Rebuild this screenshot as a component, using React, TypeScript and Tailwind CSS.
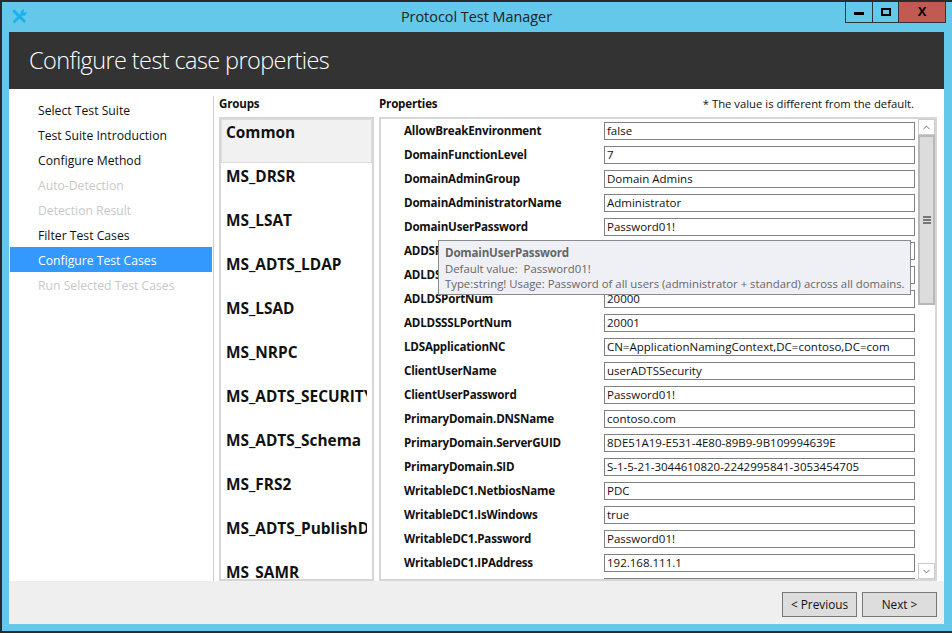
import { ChevronDown, ChevronUp } from 'lucide-react';

const steps = [
  { label: 'Select Test Suite' },
  { label: 'Test Suite Introduction' },
  { label: 'Configure Method' },
  { label: 'Auto-Detection', disabled: true },
  { label: 'Detection Result', disabled: true },
  { label: 'Filter Test Cases' },
  { label: 'Configure Test Cases', active: true },
  { label: 'Run Selected Test Cases', disabled: true },
];

const groups = [
  'Common',
  'MS_DRSR',
  'MS_LSAT',
  'MS_ADTS_LDAP',
  'MS_LSAD',
  'MS_NRPC',
  'MS_ADTS_SECURITY',
  'MS_ADTS_Schema',
  'MS_FRS2',
  'MS_ADTS_PublishDC',
  'MS_SAMR',
];

const properties = [
  ['AllowBreakEnvironment', 'false'],
  ['DomainFunctionLevel', '7'],
  ['DomainAdminGroup', 'Domain Admins'],
  ['DomainAdministratorName', 'Administrator'],
  ['DomainUserPassword', 'Password01!'],
  ['ADDSPortNum', '389'],
  ['ADLDSInstanceName', 'ADLDS'],
  ['ADLDSPortNum', '20000'],
  ['ADLDSSSLPortNum', '20001'],
  ['LDSApplicationNC', 'CN=ApplicationNamingContext,DC=contoso,DC=com'],
  ['ClientUserName', 'userADTSSecurity'],
  ['ClientUserPassword', 'Password01!'],
  ['PrimaryDomain.DNSName', 'contoso.com'],
  ['PrimaryDomain.ServerGUID', '8DE51A19-E531-4E80-89B9-9B109994639E'],
  ['PrimaryDomain.SID', 'S-1-5-21-3044610820-2242995841-3053454705'],
  ['WritableDC1.NetbiosName', 'PDC'],
  ['WritableDC1.IsWindows', 'true'],
  ['WritableDC1.Password', 'Password01!'],
  ['WritableDC1.IPAddress', '192.168.111.1'],
];

export default function App() {
  return (
    <div className="h-[633px] w-[952px] overflow-hidden bg-[#2b2b2b] pl-[2px] pt-[2px] pb-[2px] font-['Open_Sans',sans-serif] text-[12.2px] text-[#111]">
      <div className="flex h-full flex-col bg-[#63c8ea] pl-[7px] pr-[8px] pb-[7px]">
        {/* title bar */}
        <div className="relative flex h-[30px] shrink-0 items-center justify-center">
          <svg className="absolute left-[3px] top-[7px] h-[15px] w-[15px]" viewBox="0 0 15 15" fill="none" stroke="#1ab2ee">
            <path d="M1.5 13.5 L10 5" strokeWidth="2.6" />
            <path d="M1 1.5 L2.5 0.8 L13.8 12 L12.2 13.8 L1 3 Z" fill="#1ab2ee" strokeWidth="0.6" />
            <path d="M9 2.5 L11.5 0.5 L11.5 3 L12.5 4 L14.5 3.5 L12.5 6.5 L9.5 6 Z" fill="#1ab2ee" strokeWidth="0.6" />
          </svg>
          <span className="text-[14.4px] text-[#222]">Protocol Test Manager</span>
          <div className="absolute right-[-2px] top-0 flex h-[21px] border border-t-0 border-[#333]">
            <div className="flex w-[27px] items-start justify-center border-r border-[#333]">
              <div className="mt-[10px] h-[3px] w-[10px] bg-black" />
            </div>
            <div className="flex w-[26px] items-start justify-center border-r border-[#333]">
              <div className="mt-[6px] h-[8px] w-[10px] border-2 border-black" />
            </div>
            <div className="flex w-[46px] items-center justify-center bg-[#c15b52] text-[13px] font-bold text-black">X</div>
          </div>
        </div>

        {/* header */}
        <div className="flex h-[57px] shrink-0 items-center bg-[#333333] pl-[20px] pt-[1px] text-[23.5px] font-light tracking-[-0.6px] text-white">
          Configure test case properties
        </div>

        {/* body */}
        <div className="flex min-h-0 flex-1 bg-white">
          <nav className="w-[203px] shrink-0 pt-[8px]">
            {steps.map((s) => (
              <div
                key={s.label}
                className={
                  s.active
                    ? 'ml-[1px] flex h-[25px] items-center bg-[#3399ff] pl-[28px] pt-[3px] text-white'
                    : s.disabled
                      ? 'ml-[1px] flex h-[25px] items-center pl-[28px] pt-[3px] text-[#c8c8c8]'
                      : 'ml-[1px] flex h-[25px] items-center pl-[28px] pt-[3px]'
                }
              >
                {s.label}
              </div>
            ))}
          </nav>

          <div className="ml-[1px] mt-[7px] w-[1px] shrink-0 bg-[#cccccc]" />

          <div className="ml-[5px] flex w-[155px] shrink-0 flex-col">
            <div className="flex h-[28px] shrink-0 items-center pt-[2px] text-[11.6px] font-bold tracking-[-0.2px]">Groups</div>
            <div className="min-h-0 flex-1 overflow-hidden border-2 border-[#d6d6d6]">
              {groups.map((g, i) => (
                <div
                  key={g}
                  className={
                    i === 0
                      ? 'h-[44px] border border-[#dddddd] bg-[#f1f1f1] pl-[4px] pt-[1px] text-[15.4px] font-bold'
                      : 'h-[44px] border border-transparent pl-[4px] pt-[1px] text-[15.4px] font-bold'
                  }
                >
                  <div className="w-[141px] overflow-hidden whitespace-nowrap">{g}</div>
                </div>
              ))}
            </div>
          </div>

          <div className="ml-[5px] flex min-w-0 flex-1 flex-col pr-[7px]">
            <div className="flex h-[28px] shrink-0 items-center justify-between pt-[2px] pr-[23px]">
              <span className="text-[11.6px] font-bold tracking-[-0.2px]">Properties</span>
              <span className="text-[11.3px]">* The value is different from the default.</span>
            </div>
            <div className="relative flex min-h-0 flex-1 overflow-hidden border-2 border-[#d6d6d6]">
              <div className="min-w-0 flex-1">
                {properties.map(([name, value]) => (
                  <div key={name} className="flex h-[24px] items-center">
                    <div className="w-[223px] shrink-0 truncate pl-[23px] text-[11.6px] font-bold tracking-[-0.2px]">{name}</div>
                    <div className="mr-[3px] flex h-[18px] flex-1 items-center border border-[#808080] pl-[2px] text-[11.5px]">
                      {value}
                    </div>
                  </div>
                ))}
                <div className="mt-[3px] ml-[223px] mr-[3px] h-[18px] border border-[#808080]" />
              </div>
              <div className="flex w-[17px] shrink-0 flex-col bg-white">
                <div className="flex h-[16px] shrink-0 items-center justify-center border border-[#cccccc] text-[#666]">
                  <ChevronUp size={11} />
                </div>
                <div className="flex-1">
                  <div className="flex h-[170px] flex-col items-center justify-center gap-[1px] border-2 border-[#b8b8b8] bg-[#dcdcdc]">
                    <div className="h-[2px] w-[8px] bg-[#777]" />
                    <div className="h-[2px] w-[8px] bg-[#777]" />
                    <div className="h-[2px] w-[8px] bg-[#777]" />
                  </div>
                </div>
                <div className="flex h-[16px] shrink-0 items-center justify-center border border-[#cccccc] text-[#666]">
                  <ChevronDown size={11} />
                </div>
              </div>

              {/* tooltip over the list */}
              <div className="absolute left-[57px] top-[121px] h-[55px] w-[473px] border border-[#8a8a8a] bg-[#eff0f5] pl-[6px] pt-[4px] text-[11.35px] leading-[15.5px] text-[#666]">
                <div className="text-[11.6px] font-bold tracking-[-0.2px]">DomainUserPassword</div>
                <div>Default value:&nbsp; Password01!</div>
                <div className="whitespace-nowrap">Type:string! Usage: Password of all users (administrator + standard) across all domains.</div>
              </div>
            </div>
          </div>
        </div>

        {/* footer */}
        <div className="flex h-[43px] shrink-0 items-start justify-end gap-[5px] bg-[#efefef] pr-[7px] pt-[11px]">
          <button className="h-[25px] w-[75px] border border-[#777] bg-[#dddddd] text-[11.8px]">&lt; Previous</button>
          <button className="h-[25px] w-[75px] border border-[#777] bg-[#dddddd] text-[11.8px]">Next &gt;</button>
        </div>
      </div>
    </div>
  );
}
